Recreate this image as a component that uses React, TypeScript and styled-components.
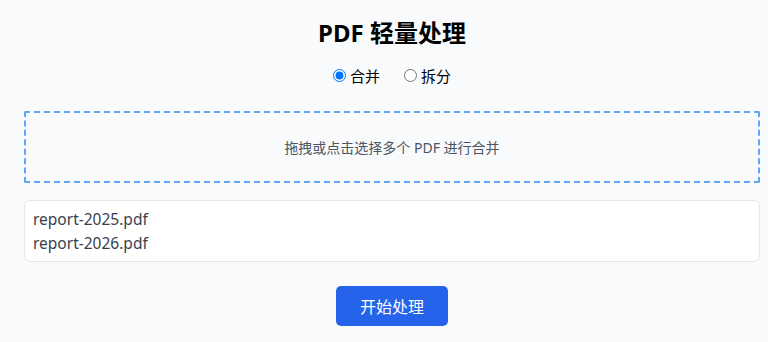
import { FC, useState } from "react";
import styled, { createGlobalStyle } from "styled-components";

const GlobalStyle = createGlobalStyle`
  html, body {
    margin: 0;
    padding: 0;
    background: #f8fafc;
    font-family: "Noto Sans", "Noto Sans CJK SC", sans-serif;
    color: #111827;
  }
`;

const Page = styled.div`
  display: flex;
  flex-direction: column;
  align-items: stretch;
  padding: 0 8px 0 24px;
`;

const Title = styled.h1`
  margin: 16px 0 0;
  text-align: center;
  font-size: 24px;
  line-height: 34px;
  font-weight: 700;
  color: #000;
`;

const ModeRow = styled.div`
  display: flex;
  justify-content: center;
  gap: 24px;
  margin-top: 9px;
  height: 32px;
  align-items: center;
`;

const ModeLabel = styled.label`
  display: flex;
  align-items: center;
  gap: 4px;
  font-size: 15px;
  color: #000;
  cursor: pointer;

  input {
    margin: 0;
    width: 13px;
    height: 13px;
    accent-color: #0075ff;
  }
`;

const DropZone = styled.div`
  margin-top: 20px;
  height: 68px;
  border: 2px dashed #60a5fa;
  border-radius: 2px;
  display: flex;
  align-items: center;
  justify-content: center;
  font-size: 14px;
  color: #4b5563;
  cursor: pointer;
`;

const FileList = styled.ul`
  list-style: none;
  margin: 17px 0 0;
  padding: 6px 8px;
  background: #fff;
  border: 1px solid #e5e7eb;
  border-radius: 6px;
`;

const FileItem = styled.li`
  font-size: 15.5px;
  line-height: 24px;
  color: #374151;
`;

const Actions = styled.div`
  display: flex;
  justify-content: center;
  margin-top: 24px;
`;

const StartButton = styled.button`
  width: 112px;
  height: 40px;
  border: none;
  border-radius: 5px;
  background: #2563eb;
  color: #fff;
  font-family: inherit;
  font-size: 16px;
  cursor: pointer;
`;

const files = ["report-2025.pdf", "report-2026.pdf"];

const App: FC = () => {
  const [mode, setMode] = useState<"merge" | "split">("merge");

  return (
    <>
      <GlobalStyle />
      <Page>
        <Title>PDF 轻量处理</Title>
        <ModeRow>
          <ModeLabel>
            <input
              type="radio"
              name="mode"
              checked={mode === "merge"}
              onChange={() => setMode("merge")}
            />
            合并
          </ModeLabel>
          <ModeLabel>
            <input
              type="radio"
              name="mode"
              checked={mode === "split"}
              onChange={() => setMode("split")}
            />
            拆分
          </ModeLabel>
        </ModeRow>
        <DropZone>拖拽或点击选择多个 PDF 进行合并</DropZone>
        <FileList>
          {files.map((f) => (
            <FileItem key={f}>{f}</FileItem>
          ))}
        </FileList>
        <Actions>
          <StartButton>开始处理</StartButton>
        </Actions>
      </Page>
    </>
  );
};

export default App;
